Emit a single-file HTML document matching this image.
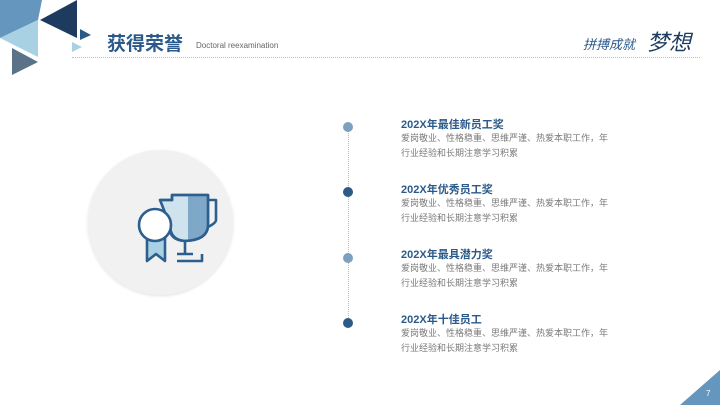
<!DOCTYPE html>
<html><head><meta charset="utf-8"><style>
body{margin:0;width:720px;height:405px;background:#fff;position:relative;overflow:hidden;font-family:"Liberation Sans","Noto Sans CJK SC",sans-serif}
.a{position:absolute}
.t{position:absolute;left:401px;font-size:11px;font-weight:bold;color:#2b5a8a;white-space:nowrap}
.d{position:absolute;left:401px;font-size:9px;color:#7a7a7a;line-height:15px;white-space:nowrap}
.dot{position:absolute;left:343px;width:10px;height:10px;border-radius:50%}
</style></head><body>
<svg class="a" style="left:0;top:0" width="100" height="80">
<polygon points="0,0 42,0 38,20 0,38" fill="#6596bd"/>
<polygon points="0,38 38,20 38,57" fill="#a8d1e4"/>
<polygon points="40,20 77,0 77,38" fill="#1d3a5f"/>
<polygon points="12,48 38,62 12,75" fill="#5a7389"/>
<polygon points="80,29 91,35 80,40" fill="#2c5a88"/>
<polygon points="72,42 82,47 72,52" fill="#a8d1e4"/>
</svg>
<div class="a" style="left:107px;top:29px;font-size:19px;font-weight:bold;color:#2b5a8a">获得荣誉</div>
<div class="a" style="left:196px;top:41px;font-size:8px;color:#666">Doctoral reexamination</div>
<div class="a" style="left:72px;top:57px;width:628px;border-top:1px dotted #aac4d8"></div>
<div class="a" style="left:583px;top:34px;font-size:13px;font-style:italic;color:#2b5a8a">拼搏成就</div>
<div class="a" style="left:647px;top:25px;font-size:22px;font-style:italic;color:#1d3a5f">梦想</div>
<div class="a" style="left:88px;top:150px;width:145px;height:145px;border-radius:50%;background:#f1f1f2;box-shadow:0 1px 3px rgba(0,0,0,.12)"></div>
<svg class="a" style="left:130px;top:185px" width="95" height="85">
<g stroke="#2d5f8e" stroke-width="2.6" fill="none" stroke-linejoin="round">
<path d="M30 15 H42 V10 H78 V40 Q78 55 55 56 Q38 55 40 40 Z" fill="#cfe3ef"/>
<path d="M58 10 H78 V38 Q78 52 58 55 Z" fill="#7fa7c8" stroke="none"/>
<path d="M30 15 H42 V10 H78 V40 Q78 55 55 56 Q40 55 40 40"/>
<path d="M78 15 H86 V35 Q86 38 78 42"/>
<path d="M55 56 V69 M47 69 H63 M47 76 H72 V69"/>
<path d="M17 52 V76 L26 69 L35 76 V52" fill="#a8d1e4"/>
<circle cx="25" cy="40" r="16" fill="#fff"/>
</g></svg>
<div class="a" style="left:348px;top:128px;height:198px;border-left:1px dotted #bbb"></div>
<div class="dot" style="top:122px;background:#7d9fc0"></div>
<div class="dot" style="top:187px;background:#2e5a88"></div>
<div class="dot" style="top:253px;background:#7d9fc0"></div>
<div class="dot" style="top:318px;background:#2e5a88"></div>
<div class="t" style="top:116px">202X年最佳新员工奖</div>
<div class="d" style="top:131px">爱岗敬业、性格稳重、思维严谨、热爱本职工作，年<br>行业经验和长期注意学习积累</div>
<div class="t" style="top:181px">202X年优秀员工奖</div>
<div class="d" style="top:196px">爱岗敬业、性格稳重、思维严谨、热爱本职工作，年<br>行业经验和长期注意学习积累</div>
<div class="t" style="top:246px">202X年最具潜力奖</div>
<div class="d" style="top:261px">爱岗敬业、性格稳重、思维严谨、热爱本职工作，年<br>行业经验和长期注意学习积累</div>
<div class="t" style="top:311px">202X年十佳员工</div>
<div class="d" style="top:326px">爱岗敬业、性格稳重、思维严谨、热爱本职工作，年<br>行业经验和长期注意学习积累</div>
<svg class="a" style="left:680px;top:370px" width="40" height="35"><polygon points="0,35 40,0 40,35" fill="#6596bd"/></svg>
<div class="a" style="left:706px;top:389px;font-size:8px;color:#fff">7</div>
</body></html>
